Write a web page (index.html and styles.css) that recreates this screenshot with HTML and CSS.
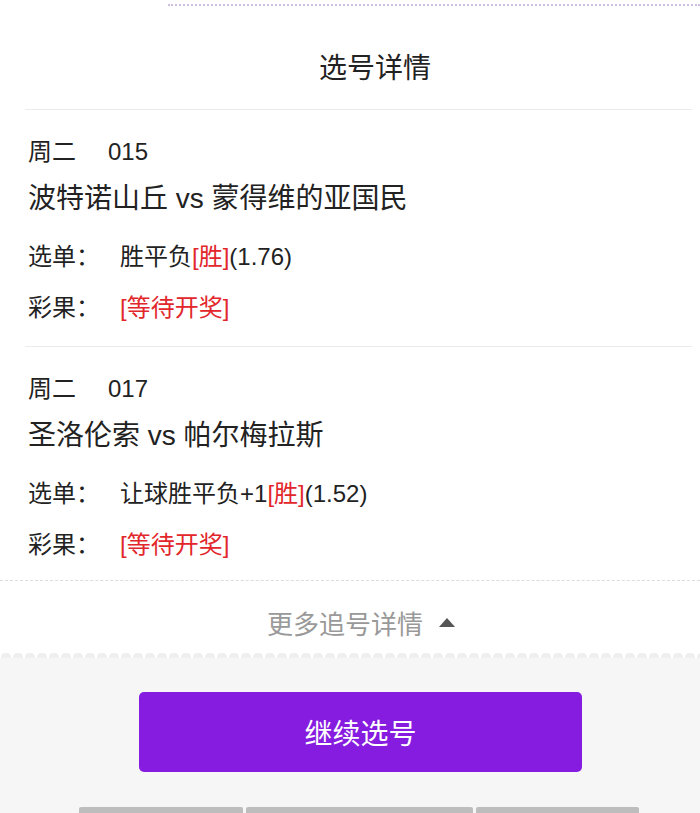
FILE: index.html
```html
<!DOCTYPE html>
<html lang="zh-CN">
<head>
  <meta charset="UTF-8">
  <meta name="viewport" content="width=device-width, initial-scale=1.0">
  <title>选号详情</title>
  <link rel="stylesheet" href="styles.css">
</head>
<body>
  <div class="sheet">
    <div class="dots"></div>
    <div class="title">选号详情</div>
    <div class="list">
      <div class="item">
        <div class="week"><span>周二</span><span class="num">015</span></div>
        <div class="match">波特诺山丘 vs 蒙得维的亚国民</div>
        <div class="row"><span class="label">选单：</span><span>胜平负<em class="red">[胜]</em>(1.76)</span></div>
        <div class="row"><span class="label">彩果：</span><span class="red">[等待开奖]</span></div>
      </div>
      <div class="item">
        <div class="week"><span>周二</span><span class="num">017</span></div>
        <div class="match">圣洛伦索 vs 帕尔梅拉斯</div>
        <div class="row"><span class="label">选单：</span><span>让球胜平负+1<em class="red">[胜]</em>(1.52)</span></div>
        <div class="row"><span class="label">彩果：</span><span class="red">[等待开奖]</span></div>
      </div>
    </div>
    <div class="more">
      <span>更多追号详情</span>
      <span class="arrow"></span>
    </div>
    <div class="scallop"></div>
  </div>
  <div class="footer">
    <button class="go-button">继续选号</button>
    <div class="tabs">
      <div class="tab tab-a"></div>
      <div class="tab tab-b"></div>
      <div class="tab tab-c"></div>
    </div>
  </div>
</body>
</html>
```

FILE: styles.css
```css
body {
  margin: 0;
  padding: 0;
  width: 700px;
  height: 813px;
  overflow: hidden;
  font-family: "Liberation Sans", "Noto Sans CJK SC", sans-serif;
  color: #222;
  background-color: #f6f6f7;
}
.sheet {
  background-color: #fff;
}
.dots {
  margin-left: 168px;
  padding-top: 4px;
  border-bottom: 2px dotted #cdbfe2;
}
.title {
  height: 103px;
  line-height: 126px;
  padding-left: 50px;
  text-align: center;
  font-size: 28px;
  color: #222;
}
.list {
  padding: 0 8px 0 25px;
}
.item {
  border-top: 1px solid #ececec;
  padding: 20px 0 13px 3px;
}
.item:last-child {
  padding-bottom: 10px;
}
.week {
  height: 44px;
  line-height: 44px;
  font-size: 24px;
}
.week .num {
  margin-left: 32px;
}
.match {
  height: 50px;
  line-height: 50px;
  font-size: 28px;
  margin-bottom: 7px;
}
.row {
  display: flex;
  height: 51px;
  line-height: 51px;
  font-size: 24px;
}
.label {
  width: 92px;
}
.red {
  color: #e2262b;
  font-style: normal;
}
.more {
  border-top: 1px dashed #dcdcdc;
  box-sizing: border-box;
  height: 70px;
  padding: 13px 0 0 22px;
  display: flex;
  align-items: center;
  justify-content: center;
  gap: 16px;
  font-size: 26px;
  color: #999;
}
.arrow {
  width: 0;
  height: 0;
  border-left: 8px solid transparent;
  border-right: 8px solid transparent;
  border-bottom: 9px solid #555;
}
.scallop {
  height: 8px;
  background-color: #fff;
  background-image: radial-gradient(circle at 50% 100%, #efefef 5px, transparent 5.5px);
  background-size: 12px 8px;
  background-repeat: repeat-x;
}
.footer {
  padding-top: 34px;
}
.go-button {
  display: block;
  margin-left: 139px;
  width: 443px;
  height: 80px;
  border: none;
  border-radius: 5px;
  background-color: #861ce0;
  color: #fff;
  font-family: inherit;
  font-size: 28px;
  cursor: pointer;
}
.tabs {
  display: flex;
  gap: 3px;
  margin: 35px 0 0 79px;
}
.tab {
  height: 10px;
  background-color: #bdbdbd;
  border-radius: 2px 2px 0 0;
}
.tab-a {
  width: 164px;
}
.tab-b {
  width: 227px;
}
.tab-c {
  width: 163px;
}
```
